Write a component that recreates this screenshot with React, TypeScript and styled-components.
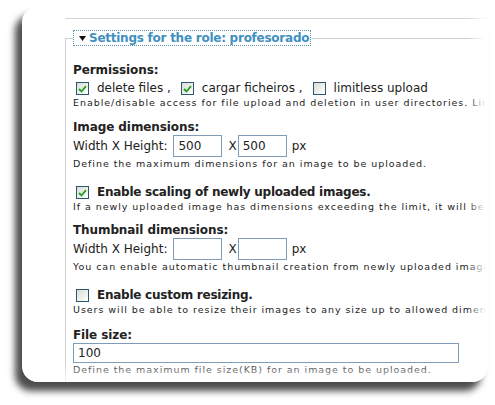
import React from 'react';
import styled, { createGlobalStyle } from 'styled-components';

const Global = createGlobalStyle`
  html, body { margin: 0; padding: 0; background: #fff; }
  body {
    width: 495px; height: 405px; overflow: hidden;
    font-family: "DejaVu Sans", Verdana, sans-serif; color: #222;
  }
`;

const Stage = styled.div`
  width: 495px; height: 405px; box-sizing: border-box;
  padding: 6px 7px 23px 22px;
`;

const Card = styled.div`
  position: relative; width: 466px; height: 376px; box-sizing: border-box;
  background: #fff; border-radius: 16px; overflow: hidden;
  box-shadow: -7px 9px 7px rgba(0, 0, 0, 0.7);
  padding: 12px 0 0 43px;
  &::after {
    content: ""; position: absolute; inset: 0; pointer-events: none;
    background:
      linear-gradient(to right, rgba(255,255,255,0) 445px, #fff 464px),
      linear-gradient(to bottom, rgba(255,255,255,0) 356px, rgba(255,255,255,0.9) 378px);
  }
`;

const Page = styled.div`
  width: 520px; border-top: 1px solid #d4d4d4; padding-top: 11px;
`;

const Fieldset = styled.fieldset`
  margin: 0; padding: 0 0 40px 7px; border: 1px solid #cfcfcf; border-right: none;
`;

const Legend = styled.legend`
  padding: 0 1px 0 5px; margin: 0;
  border: 1px dotted #5f97a8;
  font: bold 12px/14px "DejaVu Sans", Verdana, sans-serif;
  letter-spacing: -0.25px;
  color: #3f90c0;
  display: flex; align-items: center; gap: 3px;
`;

const Caret = styled.svg`
  width: 7px; height: 5px; flex: none;
`;

const Label = styled.div<{ $mt?: number }>`
  margin-top: ${(p) => p.$mt ?? 0}px;
  font: bold 12px/15px "DejaVu Sans", Verdana, sans-serif; color: #222;
  letter-spacing: -0.1px;
  white-space: nowrap;
`;

const Row = styled.div<{ $mt?: number; $h?: number }>`
  margin-top: ${(p) => p.$mt ?? 0}px;
  height: ${(p) => p.$h ?? 15}px;
  display: flex; align-items: center;
  font: 12px/15px "DejaVu Sans", Verdana, sans-serif; color: #222;
  white-space: nowrap;
`;

const CheckItem = styled.span<{ $bold?: boolean }>`
  display: inline-flex; align-items: center; gap: 8px; margin-left: 3px; margin-right: 7px;
  font-weight: ${(p) => (p.$bold ? 'bold' : 'normal')};
  letter-spacing: ${(p) => (p.$bold ? '-0.25px' : '0')};
`;

const Box = styled.span`
  width: 11px; height: 11px; flex: none;
  border: 1px solid #2c5575;
  background: linear-gradient(135deg, #dcdcd6 0%, #f4f4f0 70%, #fff 100%);
  display: inline-flex; align-items: center; justify-content: center;
`;

const Desc = styled.div<{ $mt?: number }>`
  margin-top: ${(p) => p.$mt ?? 0}px;
  font: 9.5px/14px "DejaVu Sans", Verdana, sans-serif; color: #222;
  letter-spacing: 0.95px;
  white-space: nowrap;
`;

const Input = styled.span<{ $w: number; $h?: number }>`
  box-sizing: border-box; width: ${(p) => p.$w}px; height: ${(p) => p.$h ?? 22}px;
  border: 1px solid #7f9db9; background: #fff;
  display: inline-flex; align-items: center; padding-left: 4px;
  font: 12px "DejaVu Sans", Verdana, sans-serif; color: #222;
`;

const Sep = styled.span<{ $l: number; $r: number }>`
  margin: 0 ${(p) => p.$r}px 0 ${(p) => p.$l}px;
`;

const Check = () => (
  <svg width="9" height="8" viewBox="0 0 9 8">
    <path d="M1 4 L3.5 6.5 L8 1.2" fill="none" stroke="#21a121" strokeWidth="1.8" />
  </svg>
);

const CheckBox = ({ checked }: { checked?: boolean }) => <Box>{checked ? <Check /> : null}</Box>;

const DimRow = ({ mt, a, b }: { mt?: number; a: string; b: string }) => (
  <Row $mt={mt} $h={22}>
    <span>Width X Height:</span>
    <Sep $l={6} $r={0} />
    <Input $w={49}>{a}</Input>
    <Sep $l={6} $r={1}>X</Sep>
    <Input $w={49}>{b}</Input>
    <Sep $l={5} $r={0}>px</Sep>
  </Row>
);

export default function App() {
  return (
    <>
      <Global />
      <Stage>
        <Card>
          <Page>
            <Fieldset>
              <Legend>
                <Caret viewBox="0 0 7 5"><path d="M0 0 H7 L3.5 5 Z" fill="#111" /></Caret>
                Settings for the role: profesorado
              </Legend>

              <Label $mt={17}>Permissions:</Label>
              <Row $mt={3}>
                <CheckItem><CheckBox checked />delete files ,</CheckItem>
                <CheckItem><CheckBox checked />cargar ficheiros ,</CheckItem>
                <CheckItem><CheckBox />limitless upload</CheckItem>
              </Row>
              <Desc>Enable/disable access for file upload and deletion in user directories. Limitless upload option disables all limitations below.</Desc>

              <Label $mt={10}>Image dimensions:</Label>
              <DimRow a="500" b="500" />
              <Desc>Define the maximum dimensions for an image to be uploaded.</Desc>

              <Row $mt={14}>
                <CheckItem $bold><CheckBox checked />Enable scaling of newly uploaded images.</CheckItem>
              </Row>
              <Desc>If a newly uploaded image has dimensions exceeding the limit, it will be scaled down instead of being rejected.</Desc>

              <Label $mt={9}>Thumbnail dimensions:</Label>
              <DimRow a="" b="" />
              <Desc>You can enable automatic thumbnail creation from newly uploaded images by setting the dimensions.</Desc>

              <Row $mt={14}>
                <CheckItem $bold><CheckBox />Enable custom resizing.</CheckItem>
              </Row>
              <Desc>Users will be able to resize their images to any size up to allowed dimensions.</Desc>

              <Label $mt={11}>File size:</Label>
              <Row $h={20}>
                <Input $w={386} $h={20}>100</Input>
              </Row>
              <Desc>Define the maximum file size(KB) for an image to be uploaded.</Desc>
            </Fieldset>
          </Page>
        </Card>
      </Stage>
    </>
  );
}
